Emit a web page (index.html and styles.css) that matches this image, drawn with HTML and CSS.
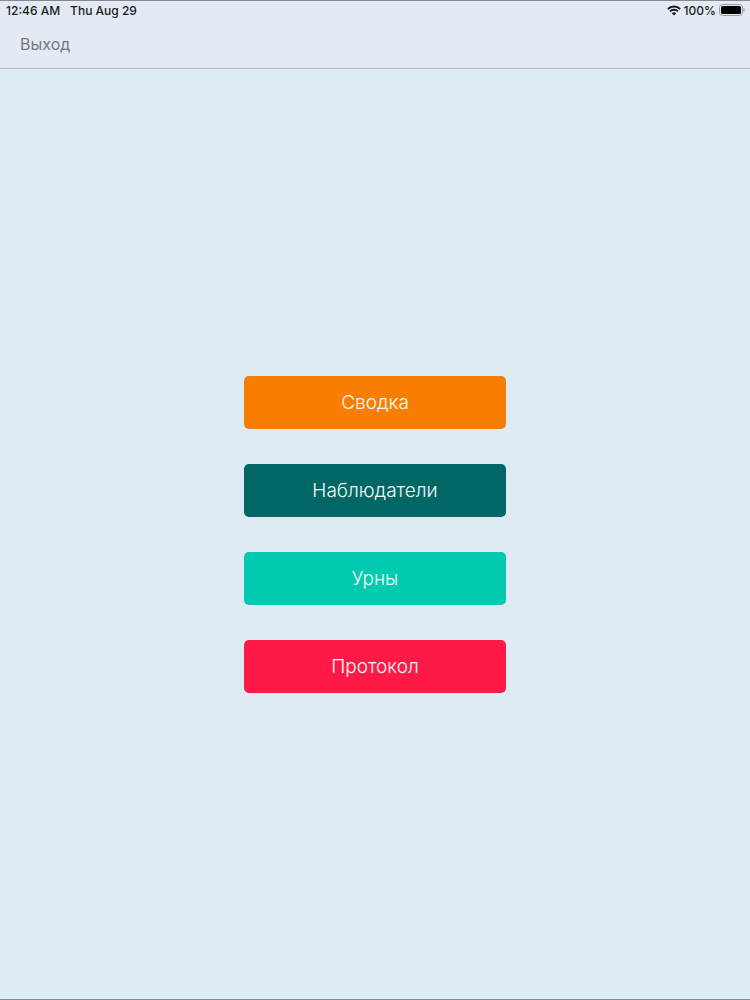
FILE: index.html
```
<!DOCTYPE html>
<html lang="ru">
<head>
    <meta charset="UTF-8">
    <title>Наблюдатели</title>
    <meta name="viewport" content="width=device-width, initial-scale=1">
    <link rel="stylesheet" href="styles.css">
</head>
<body>
<header>
    <div class="status">
        <span>12:46 AM</span>
        <span>Thu Aug 29</span>
        <div class="status-right">
            <svg class="wifi" viewBox="0 0 14 11" aria-hidden="true">
                <path d="M.9 4a8.8 8.8 0 0 1 12.2 0M3 6.4a5.7 5.7 0 0 1 8 0" fill="none" stroke="#16191c" stroke-width="2"/>
                <path d="M4.8 8.3a3.1 3.1 0 0 1 4.4 0L7 10.5z" fill="#16191c"/>
            </svg>
            <span>100%</span>
            <svg class="battery" viewBox="0 0 26 12" aria-hidden="true">
                <rect x=".5" y=".5" width="23" height="11" rx="3" fill="none" stroke="#999da2"/>
                <rect x="2" y="2" width="20" height="8" rx="1.6" fill="#000"/>
                <path d="M24.5 4v4c1.6-.6 1.6-3.4 0-4z" fill="#999da2"/>
            </svg>
        </div>
    </div>
    <nav>
        <a href="#" class="exit">Выход</a>
    </nav>
</header>
<main>
    <button type="button" class="btn orange">Сводка</button>
    <button type="button" class="btn teal">Наблюдатели</button>
    <button type="button" class="btn mint">Урны</button>
    <button type="button" class="btn red">Протокол</button>
</main>
</body>
</html>
```
FILE: styles.css
```
* { box-sizing: border-box; }
body {
    font-family: Inter, Arial, sans-serif;
    background: #deebf3;
    margin: 0;
    min-height: 100vh;
    display: flex;
    flex-direction: column;
    border-top: 1px solid #85898e;
    border-bottom: 1px solid #85898e;
}
header { background: #e3eaf3; border-bottom: 1px solid #b3bdc8; }
.status {
    display: flex;
    align-items: center;
    gap: 10px;
    height: 18px;
    padding: 0 5px 0 6px;
    font-size: 12px;
    font-weight: 500;
    color: #1a1c20;
}
.status-right { display: flex; align-items: center; gap: 3px; margin-left: auto; }
.wifi { width: 14px; height: 11px; }
.battery { width: 26px; height: 12px; }
nav { display: flex; align-items: center; height: 49px; padding: 0 20px; }
.exit { color: #727882; font-size: 16px; text-decoration: none; }
main {
    flex: 1;
    display: flex;
    flex-direction: column;
    align-items: center;
    justify-content: center;
    gap: 35px;
}
.btn {
    width: 35%;
    height: 53px;
    border: none;
    border-radius: 5px;
    color: #f6f9fa;
    font-family: inherit;
    font-size: 19px;
    font-weight: 300;
    cursor: pointer;
}
.orange { background: #f77e00; }
.teal { background: #006764; }
.mint { background: #02cab0; }
.red { background: #ff1946; }
```
